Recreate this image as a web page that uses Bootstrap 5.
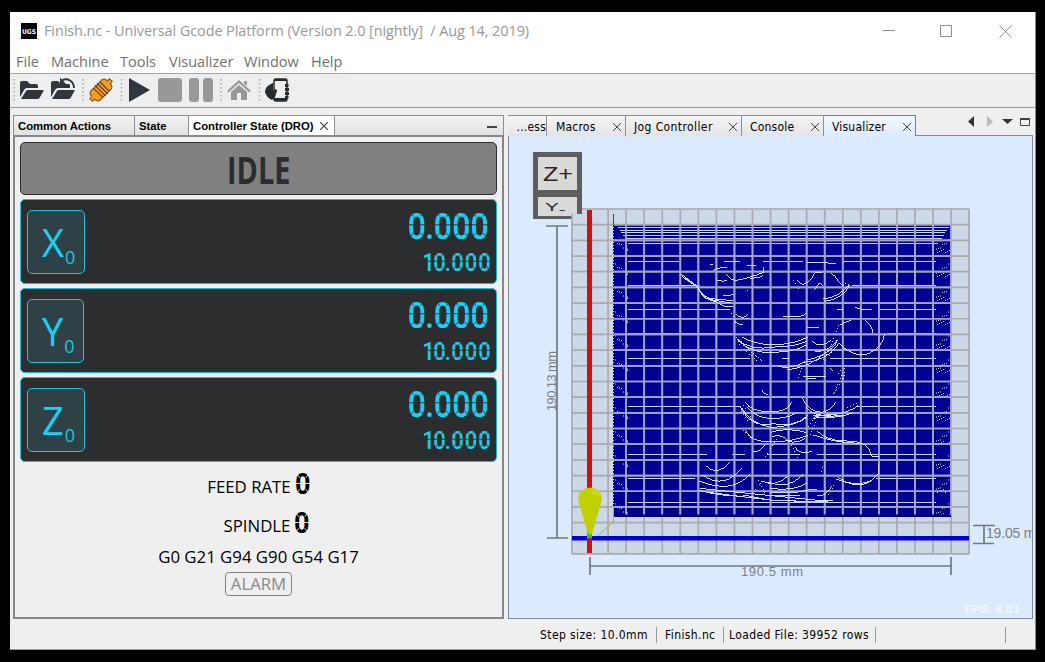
<!DOCTYPE html>
<html lang="en">
<head>
<meta charset="utf-8">
<title>Universal Gcode Platform</title>
<link href="https://cdn.jsdelivr.net/npm/bootstrap@5.3.0/dist/css/bootstrap.min.css" rel="stylesheet">
<style>
body{background:#000;height:662px;overflow:hidden;padding:12px 9px 12px 10px;font-family:"Open Sans","Noto Sans",sans-serif;color:#000;line-height:1}
.win{height:638px;background:#efefef;border-right:1px solid #8c8c8c;border-bottom:1px solid #a0a0a0}
.win>*{flex-shrink:0}
.titlebar{height:38px;background:#fff;padding:0 22px 0 11px;color:#999;font-size:14.5px}
.caption{white-space:pre;letter-spacing:-.11px}
.logo{width:16px;height:16px;background:#000;margin-right:7px}
.menubar{height:24px;background:#fff;border-bottom:1px solid #a5a5a5;padding:2px 0 0 6px;font-size:14.5px;color:#707070}
.toolbar{height:34px;border-bottom:1px solid #999;background:#eee}
.main{padding:7px 2px 0 3px;height:511px}
.left{width:491px;margin-right:4px}
.ltabs{height:22px;border:1px solid #8e8f94;border-bottom:2px solid #85878c;background:linear-gradient(#f3f3f3,#e2e2e4);font:bold 11.3px "Liberation Sans",Arial,sans-serif}
.ltabs>div{border-right:1px solid #8e8f94;padding-left:4px;height:19px}
.lbody{height:482px;border:2px solid #85878c;border-top:0;padding:5px 5px 0}
.state{height:53px;background:#808080;border:1px solid #2b2d2e;border-radius:5px;color:#2b2d2e}
.state span{font-weight:700;font-size:38px;display:inline-block;transform:scaleX(.76)}
.axis{height:85px;margin-top:4px;background:#2b2d2e;border:1px solid #22b8ce;border-radius:5px;padding:10px 6px;color:#18d1f5}
.zero{width:58px;height:64px;border:1px solid #22c4dc;border-radius:5px;background:#2d4147;color:#18d1f5;font-size:38px;padding:12px 0 0 14px}
.zero small{font-size:18px;position:relative;top:7px;left:1px;color:#22c4dc}
.info{font-size:16.8px}
.alarm{border:1px solid #808080;border-radius:4px;color:#8a8a8a;width:67px;height:24px;padding-top:2px}
.tah{font-family:"DejaVu Sans Condensed","DejaVu Sans",sans-serif;font-size:12px;letter-spacing:.2px}
.rtabs{height:21px;border-bottom:1px solid #7c8a99}
.rtabs .rt{height:21px;border:1px solid #8e8f94;border-left:0;border-bottom:0;background:linear-gradient(#f5f5f5,#e4e4e4);padding:1px 4px 0 9px}
.rtabs .sel{background:linear-gradient(#f2f8fe,#dceaff);border-color:#5b87a8;height:22px;margin-bottom:-1px}
.view{height:483px;border:1px solid #7c8a99;border-top:0}
.view svg,.toolbar svg,.readout{display:block}
.readout{font-family:Roboto,"Liberation Sans",sans-serif;font-weight:500;overflow:visible}
.status{height:30px;padding:2px 0 0 530px;letter-spacing:.4px}
.status div{height:16px;border-right:1px solid #999}
</style>
</head>
<body>
<div class="win d-flex flex-column">
  <div class="titlebar d-flex align-items-center">
    <div class="logo d-flex align-items-center justify-content-center"><svg width="16" height="16"><text x="1" y="11" font-family="DejaVu Sans" font-size="6.500" font-weight="bold" fill="#fff" textLength="14" lengthAdjust="spacingAndGlyphs">UGS</text></svg></div>
    <span class="caption">Finish.nc - Universal Gcode Platform (Version 2.0 [nightly]  / Aug 14, 2019)</span>
    <svg class="ms-auto" width="132" height="14" viewBox="0 1 132 14" fill="none" stroke="#8f8f8f"><path d="M1.500 7.500h12M59.500 2.500h11v11h-11zM118.500 2.500l12 12M130.500 2.500l-12 12"/></svg>
  </div>
  <nav class="menubar d-flex align-items-center">
    <span style="width:35px">File</span><span style="width:69px">Machine</span><span style="width:49px">Tools</span><span style="width:75px">Visualizer</span><span style="width:67px">Window</span><span>Help</span>
  </nav>
  <div class="toolbar">
    <svg width="300" height="33" viewBox="10 74 300 33">
      <g stroke="#aaa" stroke-width="1.500" stroke-dasharray="1.500 2.500"><path d="M14 79v23M83 79v23M121.500 79v23M221 79v23M259.500 79v23"/></g>
      <g fill="#30363d">
        <path d="M20 97V83q0-2 2-2h5l3 3h6q2 0 2 2v2H27q-2 0-3 2zM21 99l5-8q.7-1 2-1h15q1 0 .5 1l-4 7q-.6 1-2 1z"/>
        <path d="M51 97V83q0-2 2-2h5l3 3h9v4H58q-2 0-3 2zM52 99l5-8q.7-1 2-1h15q1 0 .5 1l-4 7q-.6 1-2 1z"/>
        <path d="M129 78l21 12-21 12z"/>
      </g>
      <path d="M61 81q4-3 8 0t4 7" fill="none" stroke="#eee" stroke-width="4"/>
      <path d="M62 80.500q4-2.500 8 0t4 7.500" fill="none" stroke="#30363d" stroke-width="2"/><path d="M60 77.500v6.500h6z" fill="#30363d"/>
      <g transform="translate(101 90) rotate(-45)" fill="#f89c1c" stroke="#7a4a0a" stroke-width="1"><path d="M-14-2h3q0-4 3-4.500h16q3 .5 3 4.500h3v4h-3q0 4-3 4.500H-8q-3-.5-3-4.500h-3z"/><path d="M-4-6.500V6.500M-1-7.500V7.500M2-7.500V7.500M5-6.500V6.500" stroke="#40300a"/></g>
      <g fill="#969899"><rect x="158" y="78" width="24" height="24" rx="3"/><rect x="189" y="78" width="10" height="24" rx="3"/><rect x="203" y="78" width="10" height="24" rx="3"/><path d="M239 80l12 11-1.500 1.500L239 83l-10.500 9.500L227 91zM244 81h3v5l-3-2.500zM231 92l8-7 8 7v8h-6v-7h-4v7h-6z"/></g>
      <g fill="#262b30"><rect x="274" y="79" width="13" height="22" rx="2" fill="#eee" stroke="#262b30" stroke-width="1.500"/><path d="M274 79h13v2h-13zM274 98h13v3h-13zM273 83v8l2-2q2 0 2 2l-2 6-3 3q-6-3-7-8 0-6 8-9z"/><path d="M285 84h3.500v3H285zM285 88h4v3h-4zM285 92h4v3h-4zM285 96h3.500v2.500H285z"/></g>
    </svg>
  </div>
  <div class="main d-flex">
    <section class="left">
      <div class="ltabs d-flex">
        <div class="d-flex align-items-center" style="width:121px">Common Actions</div>
        <div class="d-flex align-items-center" style="width:54px">State</div>
        <div class="d-flex align-items-center bg-white" style="width:146px"><span class="text-nowrap">Controller State (DRO)</span><svg class="ms-auto" style="margin-right:6px" width="8" height="8" stroke="#444" stroke-width="1.200"><path d="M0 0l8 8M8 0l-8 8"/></svg></div>
        <svg class="ms-auto" style="margin-right:5px" width="12" height="19"><path d="M1 11h10" stroke="#444" stroke-width="2"/></svg>
      </div>
      <div class="lbody">
        <div class="state d-flex align-items-center justify-content-center"><span>IDLE</span></div>
        <div class="axis d-flex justify-content-between"><div class="zero text-nowrap">X<small>0</small></div><svg class="readout" width="90" height="64"></svg></div>
        <div class="axis d-flex justify-content-between"><div class="zero text-nowrap" style="width:57px">Y<small>0</small></div><svg class="readout" width="90" height="64"></svg></div>
        <div class="axis d-flex justify-content-between"><div class="zero text-nowrap">Z<small>0</small></div><svg class="readout" width="90" height="64"></svg></div>
        <div class="info d-flex flex-column align-items-center">
          <div class="d-flex align-items-end" style="margin-top:9px;height:26px"><span style="margin-bottom:1px">FEED RATE</span><svg class="readout single" width="19" height="26"></svg></div>
          <div class="d-flex align-items-end" style="margin-top:13px;height:26px;padding-left:16px"><span style="margin-bottom:1px">SPINDLE</span><svg class="readout single" width="19" height="26"></svg></div>
          <div style="margin-top:13px">G0 G21 G94 G90 G54 G17</div>
          <div class="alarm d-flex align-items-center justify-content-center" style="margin-top:6px">ALARM</div>
        </div>
      </div>
    </section>
    <section class="flex-grow-1">
      <div class="rtabs tah d-flex">
        <div class="rt d-flex align-items-center justify-content-end px-0" style="width:39px">...ess</div>
        <div class="rt d-flex align-items-center justify-content-between" style="width:79px">Macros<svg width="8" height="8" stroke="#444"><path d="M0 0l8 8M8 0l-8 8"/></svg></div>
        <div class="rt d-flex align-items-center justify-content-between ps-2" style="width:116px;letter-spacing:.4px">Jog Controller<svg width="8" height="8" stroke="#444"><path d="M0 0l8 8M8 0l-8 8"/></svg></div>
        <div class="rt d-flex align-items-center justify-content-between ps-2" style="width:82px">Console<svg width="8" height="8" stroke="#444"><path d="M0 0l8 8M8 0l-8 8"/></svg></div>
        <div class="rt sel d-flex align-items-center justify-content-between ps-2" style="width:92px">Visualizer<svg width="8" height="8" stroke="#444"><path d="M0 0l8 8M8 0l-8 8"/></svg></div>
        <svg class="ms-auto" width="66" height="14"><path d="M7 1v11L1 6.500z" fill="#333"/><path d="M20 1v11l6-5.500z" fill="#bbb"/><path d="M35 4h11l-5.500 5z" fill="#333"/><path d="M53.500 4.500h9v6h-9z" fill="none" stroke="#444"/><path d="M53 4h10" stroke="#444" stroke-width="2"/></svg>
      </div>
      <div class="view">
        <svg width="523" height="482" viewBox="509 136 523 482" font-family="Liberation Sans,Arial,sans-serif">
          <defs><clipPath id="stock"><path d="M613 225h338v292H613z"/></clipPath></defs>
          <rect x="509" y="136" width="523" height="482" fill="#dceaff"/>
          <rect x="533" y="152" width="49" height="67" fill="#5e5e5e"/>
          <rect x="538" y="157" width="39" height="33" fill="#d9d9d9"/><rect x="538" y="197" width="39" height="19" fill="#d9d9d9"/>
          <text x="543" y="181" font-size="21" fill="#282828" textLength="30" lengthAdjust="spacingAndGlyphs">Z+</text>
          <text transform="translate(545 211) scale(1.600 .85)" font-size="13" fill="#282828">Y<tspan dy="2">-</tspan></text>
          <path d="M572 214h10v-6h387v346H572z" fill="#ccd8e8"/>
          <rect x="613" y="225" width="338" height="292" fill="#000092"/>
          <path id="speck" stroke="#ccd8f5" stroke-width="1" fill="none"/>
          <path d="M618 227.500H949M620 230.500H947M621 232.500H945M623 235.500H944M625 238.500H942M628 243.500H938M628 261.500H679M724 261.500H730M763 261.500H803M842 261.500H936M628 285.500H700M852 285.500H936M628 309.500H730M880 309.500H936M628 333.500H732M888 333.500H936M628 358.500H750M830 358.500H936M628 406.500H740M857 406.500H936M628 454.500H707M732 454.500H745M767 454.500H800M817 454.500H936M628 478.500H695M876 478.500H936M628 502.500H936" stroke="#cdd9f8" stroke-width="1.200"/>
          <g fill="none" stroke-width="1.700"><path class="mesh" stroke="#a9abad"/><path class="mesh" stroke="#a3a3ca" clip-path="url(#stock)"/></g>
          <g fill="none" stroke="#d2defc" stroke-width="3" shape-rendering="crispEdges">
            <g transform="translate(670 245) scale(.33333)">
              <path d="M33 87q25 18 45 34 20 33 40 38t70 7M35 94q25 15 48 30 12 35 40 40l60 10M40 98q30 20 45 30 10 30 30 35t50 22h25M160 150q12 6 32-3M170 87q10 22 35 18t75-22v-18M142 106q20 5 30 0M240 100q35-2 40-10M130 76l10-6 32-3M120 58h10M162 50h48M232 61h26M410 54h38q20-3 25 0t25 0M383 106q8 18 26 8t25-30h22M482 84q14 6 25 28l15 12M433 136l15-22 12 10M460 162q50-5 78-45M462 169q55-5 77-48M555 187l25 8h27M500 193h18M338 214h22q30 6 48-8M197 208q22 18 38 0M195 230q10 10 25 9M412 247h34M510 240l15-8 18-6M585 226q20 15 24 37M503 292q70 70 125 10 15-15 15-35M215 275q40 23 90 24 70 0 110-24M200 282q40 37 115 24 60 0 97-18M205 288q50 42 110 34 60-2 95-22M426 288q25 25 58-3M435 320q40 0 70-35M410 345q60-10 92-54M400 352q70-2 105-55M325 365q40 8 80-15M352 375q70-10 110-48M336 340h20M400 394h68M410 402h28M480 368l10 10"/>
              <path d="M205 288l80 68M198 275l85 80M200 292l60 55M370 105l20 30M525 115l20 15M500 285l-45 65M510 290l-45 60M185 205l15 32M240 145l-15-15M525 360l-30 40M525 370l-5 35M384 400l10-30M505 240l-20 60" stroke-dasharray="3 7"/>
            </g>
            <g transform="translate(670 375) scale(.33333)">
              <path d="M275 45q6 14 18 14M210 92q30 70 100 54 60 14 105-25M215 98q25 48 90 60 70-5 105-30M230 95q20 30 70 36 55 0 80-18M225 80q15 30 75 30 55 2 65-30M397 70q20 42 60 42 25-6 40-30M407 95q30 35 75 23M428 120q70 8 125-20l12-10M435 125q60 8 110-10M430 130q50-5 85-10M225 165q20 40 85 35 60 0 105-20M302 172q50-16 105 0M305 185q35-10 50 15 30 5 50-10M430 180q70 25 145 25 20 8 25 25l8 16h20M440 167q30 30 80 30l50 5M248 230q25 2 35-20M375 215q10 25 50 15M107 272q35 35 72-10M97 300q65 45 118-20M88 318q100 40 150-20M90 340q90 10 145 15l220 22h35M88 346q70 20 150 17l60 12 130 5h45M100 350l140 18 70 8 150 5M300 354h70q40-10 70-12M300 362h90M275 318q40 20 80-15M295 322q60 25 105-25M300 340q70 10 110-15M440 362q30 4 45-30M498 312q60 25 105 5M505 307q70 50 120-10V268"/>
              <path d="M525 0l-35 60M515 0l-25 60M205 92l30 50M220 90l30 45M415 155l25-40M420 180l20-45M220 165l25 25M325 185l-40 60M365 210l20 40M255 345l35-45M265 315l25 50M455 290l5-20M475 360l20-35M530 100l40-20" stroke-dasharray="3 7"/>
            </g>
          </g>
          <rect x="613" y="514.500" width="338" height="2.500" fill="#000070"/>
          <path d="M613.500 214v12" stroke="#0c6a20"/><path d="M613.500 507v15l-16 14" stroke="#a8b040" fill="none"/>
          <rect x="587" y="210" width="5" height="343" fill="#d40d0d"/>
          <rect x="572" y="536" width="397" height="4.500" fill="#0000de"/><rect x="587" y="538" width="5" height="15" fill="#d40d0d"/>
          <rect x="587" y="529" width="5" height="9" fill="#22d022"/>
          <path d="M578 499q1-11 12-11.500 11 .5 12 11.500l-10 35h-4z" fill="#c2cf02"/>
          <path d="M590 488l9 3 2 5-9-1z" fill="#ccd910"/>
          <g stroke="#72797e" stroke-width="1.700" fill="none"><path d="M557 226v312M546 226h22M547 538h21M590 566h361M590 557v18M951 557v18M984 526v18M973 525.500h22M973 543.500h21"/></g>
          <g fill="#7b8085" font-size="13"><text x="741" y="576" textLength="62">190.5 mm</text><text x="986" y="538" font-size="14" textLength="61">19.05 mm</text><text transform="translate(556 411) rotate(-90)" textLength="60">190.13 mm</text></g>
          <text x="965" y="613" font-size="11" font-weight="bold" fill="#f6faff" textLength="54">FPS: 4.01</text>
        </svg>
      </div>
    </section>
  </div>
  <div class="status tah d-flex align-items-center">
    <div class="d-flex align-items-center text-nowrap" style="width:117px">Step size: 10.0mm</div>
    <div class="d-flex align-items-center ps-2" style="width:67px">Finish.nc</div>
    <div class="d-flex align-items-center text-nowrap" style="width:152px;padding-left:5px">Loaded File: 39952 rows</div>
    <div style="width:130px"></div>
  </div>
</div>
<script src="https://cdn.jsdelivr.net/npm/bootstrap@5.3.0/dist/js/bootstrap.bundle.min.js"></script>
<script>
// Work-area grid: 22 by 22 cells, the column line beside the Y axis is left out
let d='';
for(let i=0;i<=22;i++){ if(i!==1) d+=`M${572+18.05*i} 209V554`; d+=`M572 ${209+15.68*i}H969`; }
d=d.replace('M572 209V554','M572 214V554').replace('M572 209H969','M582 209H969');
document.querySelectorAll('.mesh').forEach(p=>p.setAttribute('d',d));
// Stippled tool moves along both edges of the stock
let s='';
for(let y=240;y<505;y+=24){
  for(let k=0;k<7;k++){ const a=(k*5)%3;
    s+=`M${615+k*2} ${y+k*1.5+a}h1M${948-k*2} ${y+k*1.5+a}h1M${937+k*2} ${y+12-(k%4)}.5h1`; }
  s+=`M627 ${y+10}.5h1`;
}
for(let y=227;y<505;y+=3) s+=`M613 ${y}.5h1`;
document.getElementById('speck').setAttribute('d',s);
// LCD readouts: condensed digits with segment gaps laid over them
function lcd(str,xs,base,h,w,fill,bg){
  const size=h/.735, k=w/(size*.5);
  let o=`<g transform="scale(${k} 1)"><text font-size="${size}" y="${base}" x="${xs.map(x=>(x/k-size*.035).toFixed(2)).join(' ')}" fill="${fill}">${str}</text></g>`;
  let g='';
  [...str].forEach((c,i)=>{ if(c==='.')return; const x=xs[i],m=base-h/2,q=w*.28;
    g+=`M${x-1} ${m}h${w+2}`;
    if(c==='0') g+=`M${x} ${base-h}l${q} ${q+1}M${x+w} ${base-h}l${-q} ${q+1}M${x} ${base}l${q} ${-q-1}M${x+w} ${base}l${-q} ${-q-1}`; });
  return o+`<path d="${g}" stroke="${bg}" stroke-width=".9" fill="none"/>`;
}
document.querySelectorAll('.readout').forEach(e=>{
  e.innerHTML=e.classList.contains('single')
    ? `<g font-weight="700">${lcd('0',[5],23,21,13.5,'#000','#efefef')}</g>`
    : lcd('0.000',[9,26.5,35,53.5,71.5],28.5,27.5,16,'#18d1f5','#2b2d2e')+lcd('10.000',[23,34,45.5,52,65.5,79],61,19.5,11,'#20cbe8','#2b2d2e');
});
</script>
</body>
</html>
